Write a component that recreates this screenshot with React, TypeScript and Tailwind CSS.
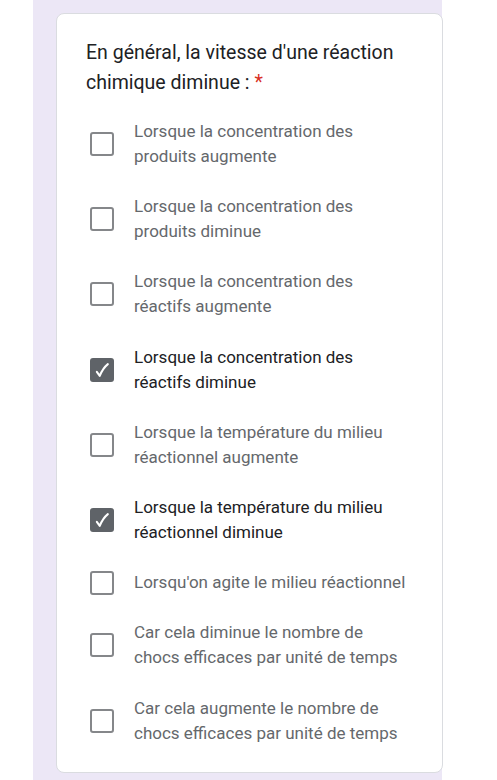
import React from 'react';

type Option = { label: string; checked?: boolean };

const options: Option[] = [
  { label: 'Lorsque la concentration des produits augmente' },
  { label: 'Lorsque la concentration des produits diminue' },
  { label: 'Lorsque la concentration des réactifs augmente' },
  { label: 'Lorsque la concentration des réactifs diminue', checked: true },
  { label: 'Lorsque la température du milieu réactionnel augmente' },
  { label: 'Lorsque la température du milieu réactionnel diminue', checked: true },
  { label: "Lorsqu'on agite le milieu réactionnel" },
  { label: 'Car cela diminue le nombre de chocs efficaces par unité de temps' },
  { label: 'Car cela augmente le nombre de chocs efficaces par unité de temps' },
];

const Checkbox: React.FC<{ checked?: boolean }> = ({ checked }) =>
  checked ? (
    <div className="w-[24px] h-[24px] shrink-0 rounded-[3px] bg-[#5f6368] flex items-center justify-center">
      <svg width="18" height="18" viewBox="0 0 16 16">
        <path d="M3.4 9.6 L6 13.2 C7.8 8.8 10.3 5.2 13.2 2.8" fill="none" stroke="white" strokeWidth="1.8" strokeLinecap="round" strokeLinejoin="round" />
      </svg>
    </div>
  ) : (
    <div className="w-[24px] h-[24px] shrink-0 rounded-[3px] border-[2.5px] border-[#85878a] bg-white" />
  );

export default function App() {
  return (
    <div className="w-[497px] h-[780px] bg-white overflow-hidden" style={{ fontFamily: 'Roboto, "Noto Sans", sans-serif' }}>
      <div className="ml-[33px] w-[409px] h-full bg-[#ece7f6] pt-[13px] pl-[23px]">
        <div className="w-[387px] h-[760px] bg-white rounded-[8px] border border-[#dadce0] pt-[24px] pl-[29px] pr-[20px]">
          <div className="text-[19.5px] leading-[30px] text-[#202124]">
            En général, la vitesse d'une réaction chimique diminue : <span className="text-[#d93025]">*</span>
          </div>
          <div className="flex flex-col gap-[25.2px] mt-[21px] pl-[4px]">
            {options.map((o) => (
              <div key={o.label} className="flex items-center gap-[20px]">
                <Checkbox checked={o.checked} />
                <div className={`text-[17px] leading-[25px] w-[276px] ${o.checked ? 'text-[#202124]' : 'text-[#65686c]'}`}>
                  {o.label}
                </div>
              </div>
            ))}
          </div>
        </div>
      </div>
    </div>
  );
}
